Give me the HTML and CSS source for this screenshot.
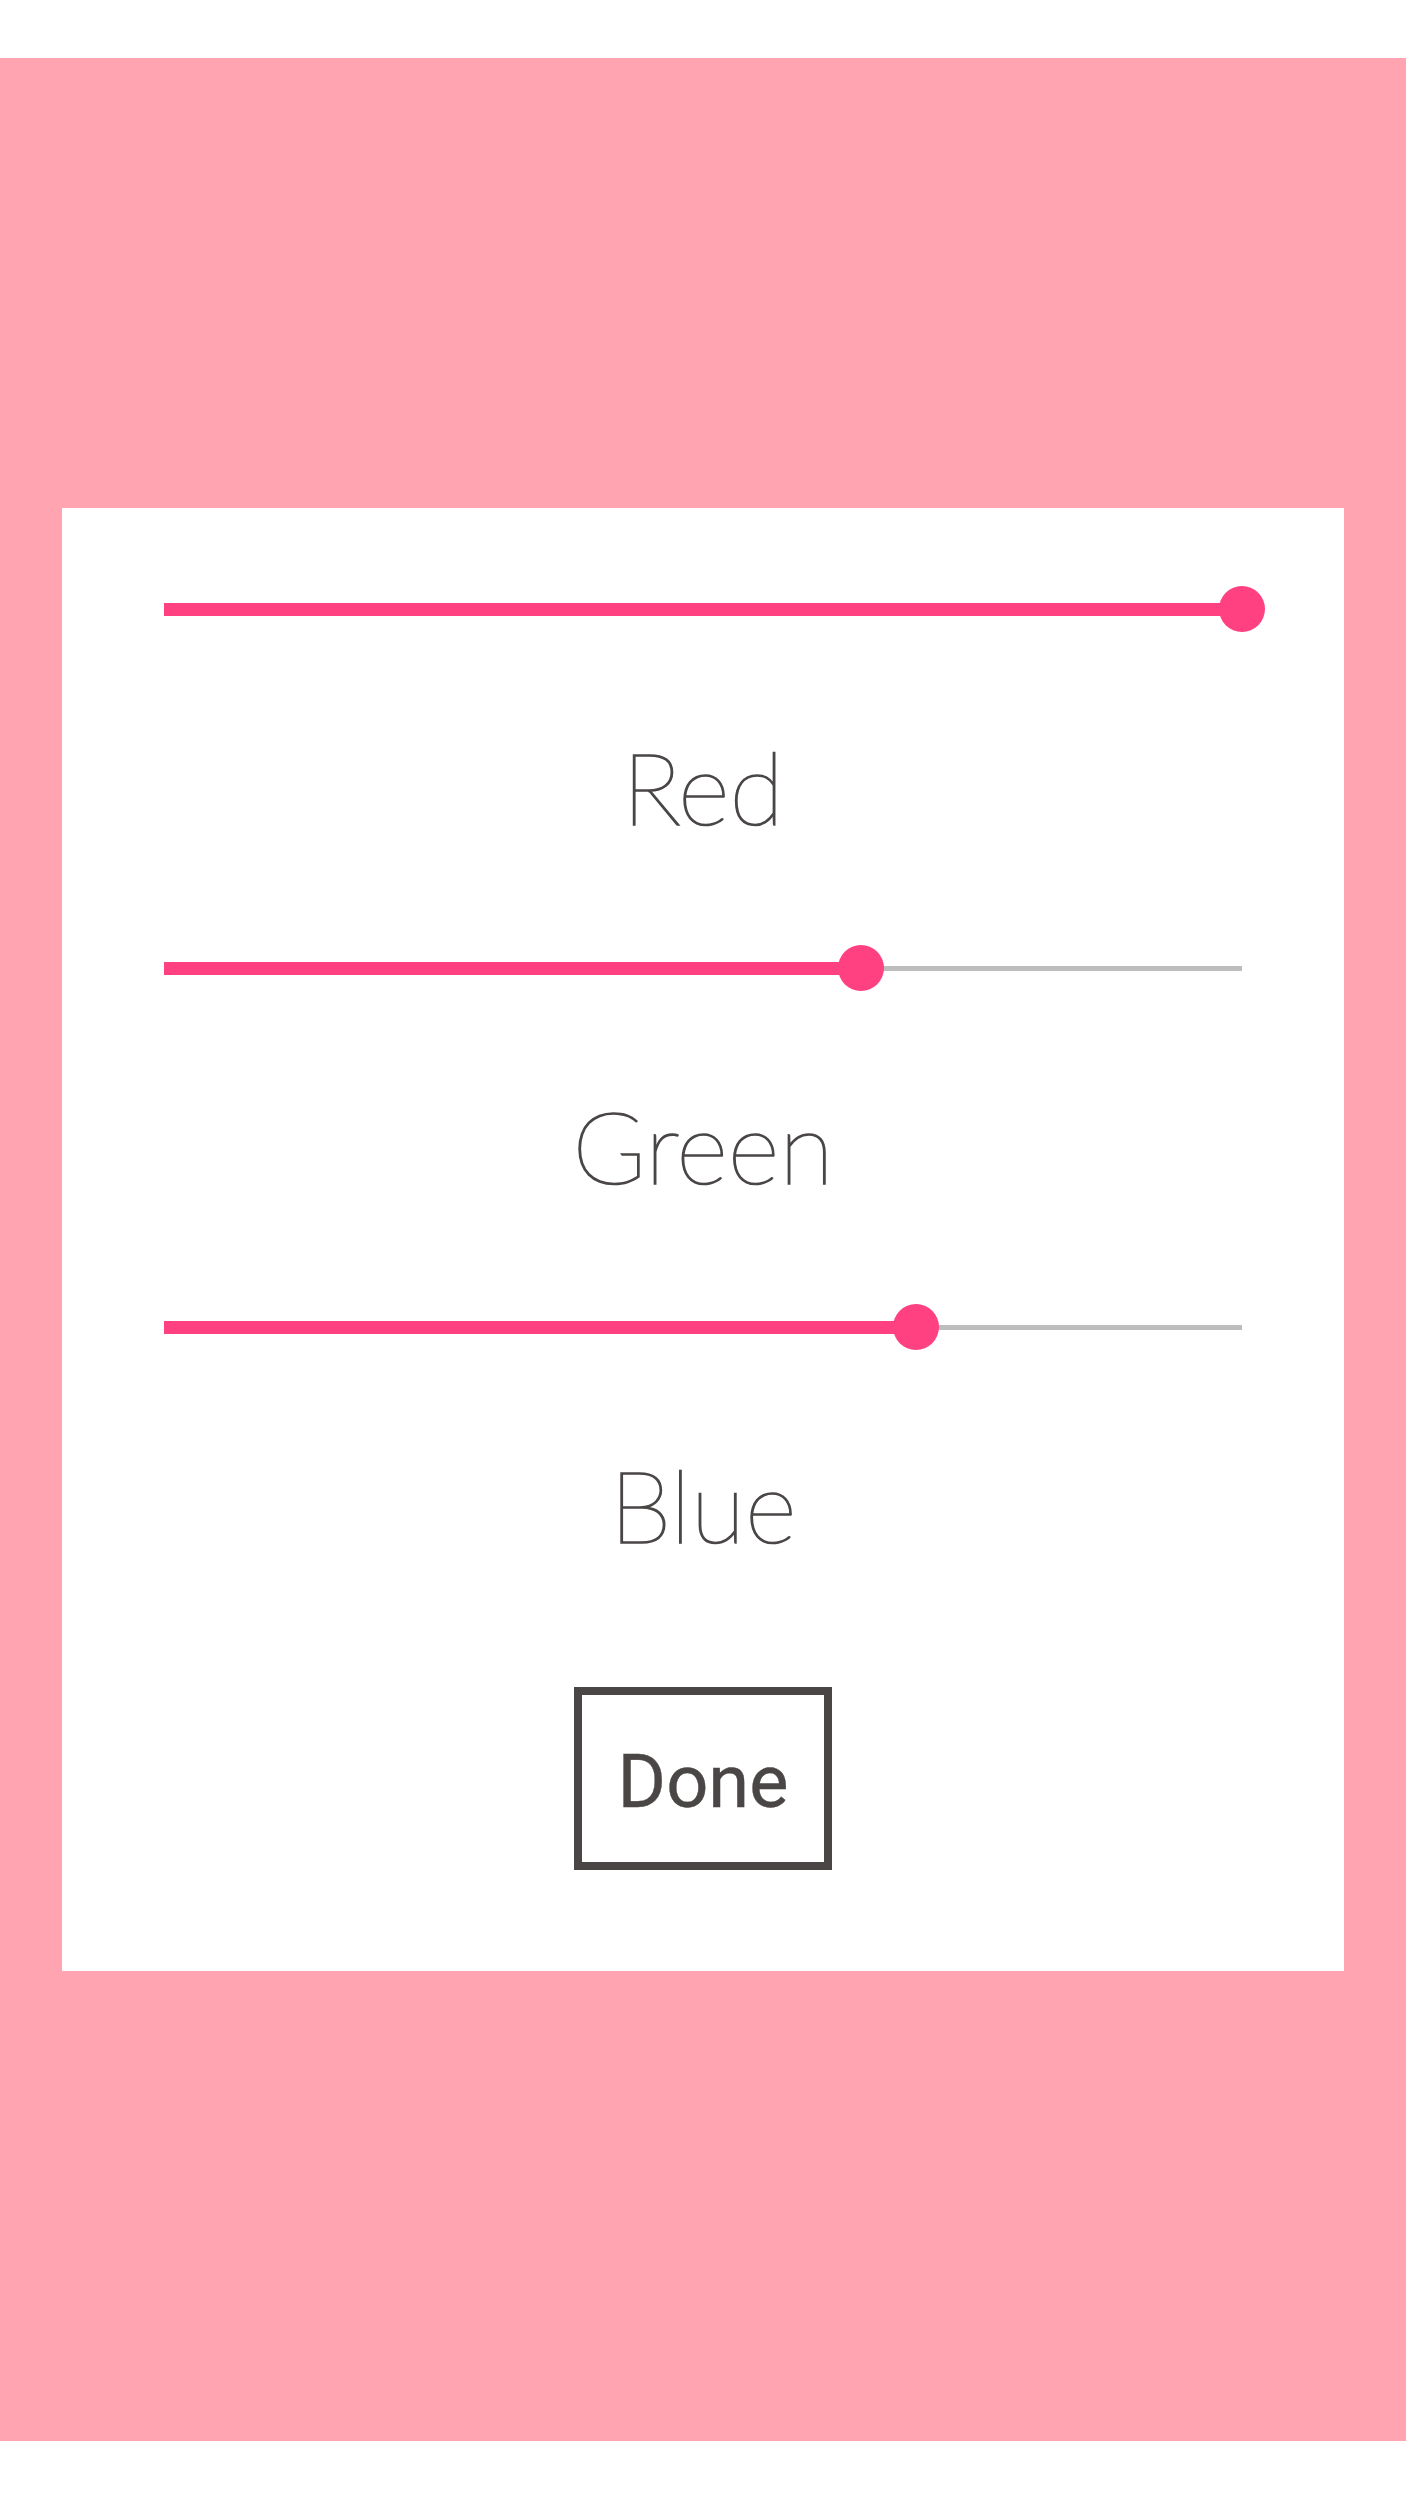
FILE: index.html
```html
<!DOCTYPE html>
<html>
<head>
<meta charset="utf-8">
<link rel="stylesheet" href="styles.css">
</head>
<body>
<div class="top-gap"></div>
<main class="stage">
  <section class="card">
    <div class="slider" style="--p:100%"><span class="thumb"></span></div>
    <div class="label">Red</div>
    <div class="slider" style="--p:64.7%"><span class="thumb"></span></div>
    <div class="label">Green</div>
    <div class="slider" style="--p:69.8%"><span class="thumb"></span></div>
    <div class="label label-last">Blue</div>
    <button class="done">Done</button>
  </section>
</main>
</body>
</html>
```
FILE: styles.css
```css
html, body {
  margin: 0;
  padding: 0;
  background: #ffffff;
}
body {
  height: 2500px;
}
.top-gap {
  height: 58px;
}
.stage {
  background: #ffa4b0;
  height: 2383px;
  box-sizing: border-box;
  padding: 450px 62px 0;
}
.card {
  background: #ffffff;
  height: 1463px;
  box-sizing: border-box;
  padding: 78px 102px 0;
  display: flex;
  flex-direction: column;
}
.slider {
  position: relative;
  height: 46px;
  flex: none;
  background:
    linear-gradient(#ff4081, #ff4081) no-repeat 0 center / var(--p) 13px,
    linear-gradient(#bdbdbd, #bdbdbd) no-repeat 0 center / 100% 5px;
}
.thumb {
  position: absolute;
  top: 0;
  left: calc(var(--p) - 23px);
  width: 46px;
  height: 46px;
  border-radius: 50%;
  background: #ff4081;
}
.label {
  height: 313px;
  flex: none;
  box-sizing: border-box;
  padding-top: 104px;
  font-family: "Lato", sans-serif;
  font-weight: 100;
  font-size: 100px;
  line-height: 1;
  color: #4a4646;
  -webkit-text-stroke: 1.6px #4a4646;
  text-align: center;
}
.label-last {
  height: 337px;
}
.done {
  flex: none;
  align-self: center;
  width: 258px;
  height: 183px;
  box-sizing: border-box;
  border: 8px solid #4a4646;
  background: #ffffff;
  padding: 6px 0 0;
  font-family: "Roboto", sans-serif;
  font-weight: 400;
  font-size: 74px;
  line-height: 1;
  color: #4a4646;
  -webkit-text-stroke: 0.4px #4a4646;
  display: flex;
  align-items: center;
  justify-content: center;
}
```
